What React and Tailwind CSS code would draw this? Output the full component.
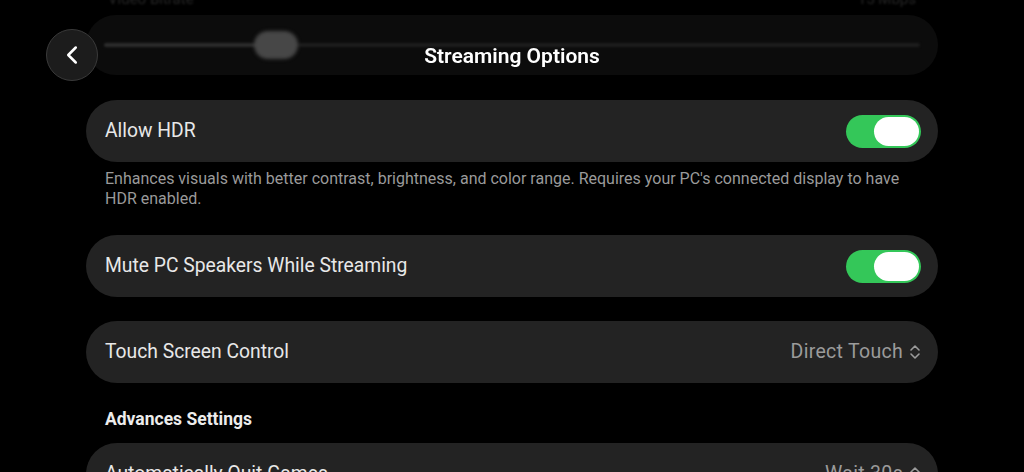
import { ChevronLeft } from 'lucide-react'

function Toggle() {
  return (
    <div className="w-[75px] h-[33px] rounded-full bg-[#34c759] flex items-center justify-end px-[2px]">
      <div className="w-[45px] h-[29px] rounded-full bg-white" />
    </div>
  )
}

function UpDown() {
  return (
    <svg width="12" height="18" viewBox="0 0 12 18" fill="none" stroke="currentColor" strokeWidth="1.6" strokeLinecap="round" strokeLinejoin="round">
      <path d="M2 7 L6 3 L10 7" />
      <path d="M2 11 L6 15 L10 11" />
    </svg>
  )
}

function Row({ label, children }) {
  return (
    <div className="h-[62px] rounded-full bg-[#232323] flex items-center justify-between pl-[19px] pr-[17px]">
      <span className="text-[19.3px] text-[#e8e8e8]">{label}</span>
      {children}
    </div>
  )
}

function Select({ value }) {
  return (
    <div className="flex items-center gap-[6px] text-[19.5px] tracking-[0.3px] text-[#9b9b9b]">
      <span>{value}</span>
      <UpDown />
    </div>
  )
}

export default function App() {
  return (
    <div className="relative h-[472px] w-[1024px] overflow-hidden bg-black" style={{ fontFamily: 'Roboto, "Noto Sans", sans-serif' }}>
      {/* Scrolled content */}
      <div className="mx-auto w-[852px] -mt-[9px]">
        {/* faded previous row */}
        <div className="flex justify-between px-[22px] text-[15px] leading-[16px] text-[#262626] blur-[1px]">
          <span>Video Bitrate</span>
          <span>15 Mbps</span>
        </div>
        <div className="mt-[8px] h-[60px] rounded-full bg-[#0c0c0c] flex items-center px-[18px]">
          <div className="relative w-full h-[4px] rounded-full bg-[#1c1c1c] blur-[1px]">
            <div className="absolute left-0 top-0 h-[4px] w-[160px] rounded-full bg-[#2c2c2c]" />
            <div className="absolute left-[150px] -top-[12px] w-[44px] h-[28px] rounded-full bg-[#474747] blur-[1.5px]" />
          </div>
        </div>

        <div className="mt-[25px]">
          <Row label="Allow HDR">
            <Toggle />
          </Row>
          <p className="mt-[7px] px-[19px] pr-[30px] text-[16px] leading-[20px] text-[#9a9a9a]">
            Enhances visuals with better contrast, brightness, and color range. Requires your PC's connected display to have HDR enabled.
          </p>
        </div>

        <div className="mt-[26px]">
          <Row label="Mute PC Speakers While Streaming">
            <Toggle />
          </Row>
        </div>

        <div className="mt-[24px]">
          <Row label="Touch Screen Control">
            <Select value="Direct Touch" />
          </Row>
        </div>

        <h2 className="mt-[25px] px-[19px] text-[17.5px] leading-[22px] font-bold text-[#ececec]">Advances Settings</h2>

        <div className="mt-[13px]">
          <Row label="Automatically Quit Games">
            <Select value="Wait 30s" />
          </Row>
        </div>
      </div>

      {/* Header over content */}
      <div className="absolute left-0 right-0 top-[29px] h-[52px] flex items-center justify-center">
        <button className="absolute left-[46px] top-0 w-[52px] h-[52px] rounded-full bg-[#1c1c1c] border border-[#3a3a3a] flex items-center justify-center text-white">
          <ChevronLeft size={30} strokeWidth={2} />
        </button>
        <h1 className="mt-[3px] text-[21px] font-semibold text-white">Streaming Options</h1>
      </div>
    </div>
  )
}
